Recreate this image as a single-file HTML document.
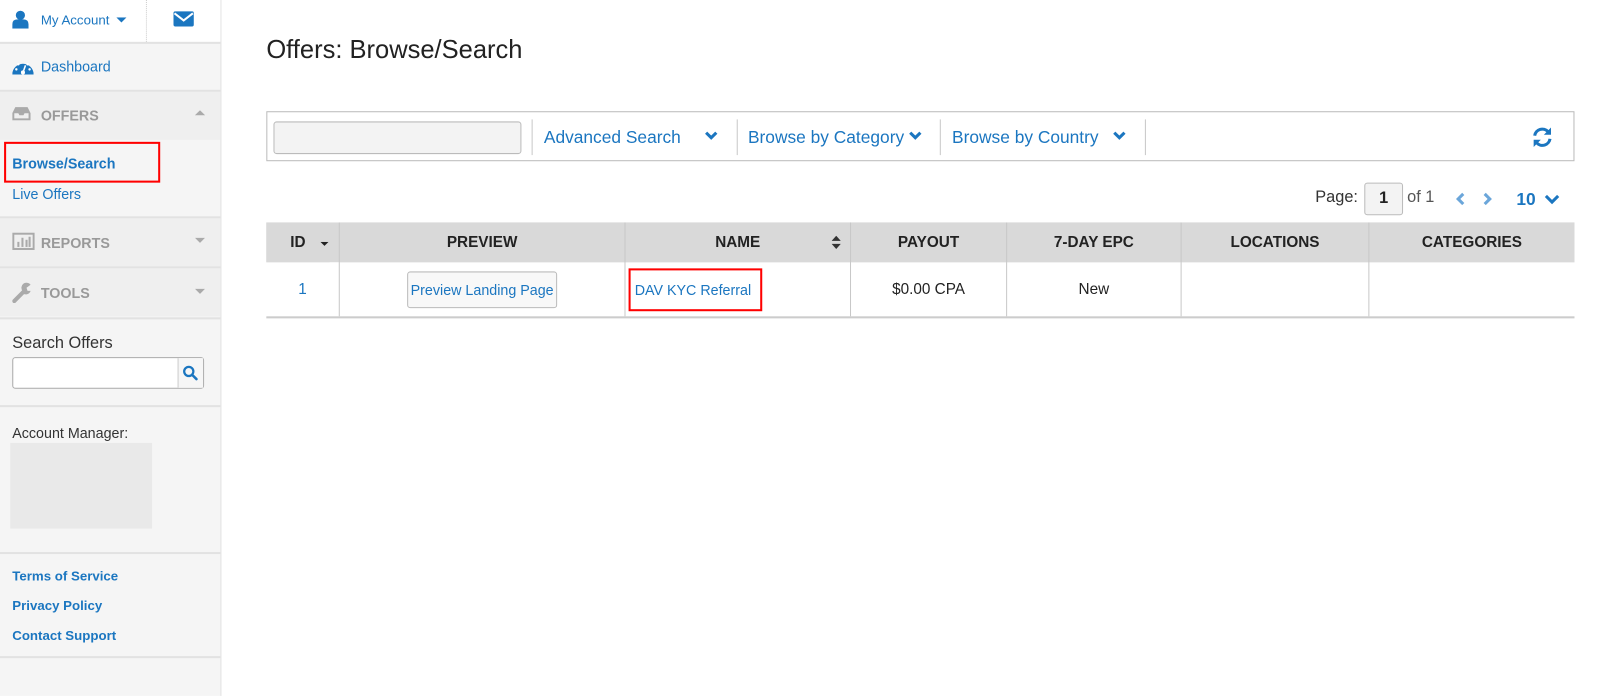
<!DOCTYPE html>
<html><head><style>
*{margin:0;padding:0;box-sizing:border-box}
html,body{width:1600px;height:696px;overflow:hidden;background:#fff}
#w{position:absolute;left:0;top:0;width:1568px;height:682px;transform:scale(1.0204);transform-origin:0 0;font-family:"Liberation Sans",Arial,sans-serif;color:#222}
.a{position:absolute}
.blue{color:#1b76c0}
.sb{left:0;top:0;width:217px;height:682px;background:#f5f5f5;border-right:1px solid #e3e3e3}
.hl{left:0;width:216px;height:2px;background:#e2e2e2}
.sec{left:0;width:216px;background:#efefef}
.gt{font-weight:bold;color:#999;font-size:14px}
.th{top:218px;height:39px;background:#d9d9d9;font-weight:bold;font-size:15px;text-align:center;line-height:39px;color:#222}
.vl{width:1px;background:#c8c8c8}
.td{top:257px;height:53px;line-height:53px;text-align:center;font-size:15px}
</style></head><body><div id="w">
<div class="a sb"></div>
<div class="a" style="left:0;top:0;width:216px;height:41px;background:#fff"></div>
<div class="a" style="left:143px;top:0;height:41px;border-left:1px dotted #ccc"></div>
<div class="a hl" style="top:41px"></div>
<svg class="a" style="left:12px;top:10px" width="16" height="18" viewBox="0 0 16 18"><circle cx="8" cy="5" r="4.5" fill="#1b76c0"/><path d="M0 18v-4q0-5 5-5h6q5 0 5 5v4z" fill="#1b76c0"/></svg>
<div class="a blue" style="left:40px;top:12px;font-size:13px">My Account</div>
<svg class="a" style="left:114px;top:17px" width="10" height="6"><path d="M0 0h10L5 5z" fill="#1b76c0"/></svg>
<svg class="a" style="left:170px;top:11px" width="20" height="15" viewBox="0 0 20 15"><rect width="20" height="15" rx="2" fill="#1b76c0"/><path d="M1 2l9 7 9-7" stroke="#fff" stroke-width="2" fill="none"/></svg>
<svg class="a" style="left:12px;top:57px" width="21" height="17" viewBox="0 0 21 17"><path d="M0 16A10.5 10.5 0 0 1 21 16z" fill="#1b76c0"/><circle cx="10.5" cy="14" r="2" fill="#fff"/><path d="M10.5 14L13 7" stroke="#fff" stroke-width="1.5"/><circle cx="4" cy="11" r="1.2" fill="#fff"/><circle cx="6" cy="6" r="1.2" fill="#fff"/><circle cx="15" cy="6" r="1.2" fill="#fff"/><circle cx="17" cy="11" r="1.2" fill="#fff"/></svg>
<div class="a blue" style="left:40px;top:57px;font-size:14px">Dashboard</div>
<div class="a hl" style="top:88px"></div>
<div class="a sec" style="top:90px;height:47px"></div>
<svg class="a" style="left:12px;top:104px" width="18" height="14" viewBox="0 0 18 14"><path d="M3 1h12l3 6v7H0V7z" fill="#aaa"/><path d="M2 7h4l1 2h4l1-2h4v5H2z" fill="#efefef"/></svg>
<div class="a gt" style="left:40px;top:105px">OFFERS</div>
<svg class="a" style="left:191px;top:108px" width="10" height="6"><path d="M0 5h10L5 0z" fill="#aaa"/></svg>
<div class="a" style="left:4px;top:139px;width:153px;height:40px;border:2px solid #f00"></div>
<div class="a blue" style="left:12px;top:152px;font-size:14px;font-weight:bold">Browse/Search</div>
<div class="a blue" style="left:12px;top:182px;font-size:14px">Live Offers</div>
<div class="a hl" style="top:212px"></div>
<div class="a sec" style="top:214px;height:47px"></div>
<svg class="a" style="left:12px;top:228px" width="22" height="17" viewBox="0 0 22 17"><rect x="1" y="1" width="20" height="15" fill="none" stroke="#aaa" stroke-width="2"/><rect x="5" y="9" width="2" height="5" fill="#aaa"/><rect x="9" y="5" width="2" height="9" fill="#aaa"/><rect x="13" y="7" width="2" height="7" fill="#aaa"/><rect x="16" y="4" width="2" height="10" fill="#aaa"/></svg>
<div class="a gt" style="left:40px;top:230px">REPORTS</div>
<svg class="a" style="left:191px;top:233px" width="10" height="6"><path d="M0 0h10L5 5z" fill="#aaa"/></svg>
<div class="a hl" style="top:261px"></div>
<div class="a sec" style="top:263px;height:47px"></div>
<svg class="a" style="left:12px;top:277px" width="20" height="20" viewBox="0 0 20 20"><path d="M2 18l9-9" stroke="#aaa" stroke-width="4" stroke-linecap="round"/><path d="M10 8a5 5 0 0 1 8-6l-4 3 1 3 3 0a5 5 0 0 1-7 3z" fill="#aaa"/></svg>
<div class="a gt" style="left:40px;top:279px">TOOLS</div>
<svg class="a" style="left:191px;top:283px" width="10" height="6"><path d="M0 0h10L5 5z" fill="#aaa"/></svg>
<div class="a hl" style="top:311px"></div>
<div class="a" style="left:12px;top:328px;font-size:16px;color:#333">Search Offers</div>
<div class="a" style="left:12px;top:350px;width:188px;height:31px;border:1px solid #aaa;border-radius:3px;background:#fff"></div>
<div class="a" style="left:174px;top:351px;width:25px;height:29px;border-left:1px solid #ccc;background:#f6f6f6"></div>
<svg class="a" style="left:179px;top:358px" width="15" height="15" viewBox="0 0 15 15"><circle cx="6" cy="6" r="4.5" fill="none" stroke="#1b76c0" stroke-width="2.2"/><path d="M9.5 9.5l4 4" stroke="#1b76c0" stroke-width="2.5" stroke-linecap="round"/></svg>
<div class="a hl" style="top:397px"></div>
<div class="a" style="left:12px;top:416px;font-size:14px;color:#333">Account Manager:</div>
<div class="a" style="left:10px;top:434px;width:139px;height:84px;background:#e9e9e9"></div>
<div class="a hl" style="top:541px"></div>
<div class="a blue" style="left:12px;top:557px;font-size:13px;font-weight:bold">Terms of Service</div>
<div class="a blue" style="left:12px;top:586px;font-size:13px;font-weight:bold">Privacy Policy</div>
<div class="a blue" style="left:12px;top:615px;font-size:13px;font-weight:bold">Contact Support</div>
<div class="a hl" style="top:643px"></div>

<div class="a" style="left:261px;top:35px;font-size:25px;color:#222">Offers: Browse/Search</div>
<div class="a" style="left:261px;top:109px;width:1282px;height:49px;border:1px solid #bbb"></div>
<div class="a" style="left:268px;top:119px;width:243px;height:32px;border:1px solid #bbb;border-radius:3px;background:#f3f3f3"></div>
<div class="a vl" style="left:521px;top:117px;height:35px"></div>
<div class="a vl" style="left:722px;top:117px;height:35px"></div>
<div class="a vl" style="left:921px;top:117px;height:35px"></div>
<div class="a vl" style="left:1122px;top:117px;height:35px"></div>
<div class="a blue" style="left:533px;top:125px;font-size:17px">Advanced Search</div>
<div class="a blue" style="left:733px;top:125px;font-size:17px">Browse by Category</div>
<div class="a blue" style="left:933px;top:125px;font-size:17px">Browse by Country</div>
<svg class="a" style="left:690px;top:128px" width="14" height="10"><path d="M2 2l5 5 5-5" stroke="#1b76c0" stroke-width="3" fill="none"/></svg>
<svg class="a" style="left:890px;top:128px" width="14" height="10"><path d="M2 2l5 5 5-5" stroke="#1b76c0" stroke-width="3" fill="none"/></svg>
<svg class="a" style="left:1090px;top:128px" width="14" height="10"><path d="M2 2l5 5 5-5" stroke="#1b76c0" stroke-width="3" fill="none"/></svg>
<svg class="a" style="left:1501px;top:124px" width="21" height="21" viewBox="0 0 21 21"><path d="M3 9a7.5 7.5 0 0 1 13-4" stroke="#1b76c0" stroke-width="3" fill="none"/><path d="M19 1v7h-7z" fill="#1b76c0"/><path d="M18 12a7.5 7.5 0 0 1-13 4" stroke="#1b76c0" stroke-width="3" fill="none"/><path d="M2 20v-7h7z" fill="#1b76c0"/></svg>

<div class="a" style="left:1289px;top:185px;font-size:16px;color:#333">Page:</div>
<div class="a" style="left:1337px;top:179px;width:38px;height:32px;border:1px solid #bbb;border-radius:3px;background:#f3f3f3;text-align:center;line-height:30px;font-size:16px;font-weight:bold">1</div>
<div class="a" style="left:1379px;top:185px;font-size:16px;color:#555">of 1</div>
<svg class="a" style="left:1426px;top:188px" width="10" height="14"><path d="M8 2L3 7l5 5" stroke="#6ba6da" stroke-width="3" fill="none"/></svg>
<svg class="a" style="left:1453px;top:188px" width="10" height="14"><path d="M2 2l5 5-5 5" stroke="#6ba6da" stroke-width="3" fill="none"/></svg>
<div class="a blue" style="left:1486px;top:186px;font-size:17px;font-weight:bold">10</div>
<svg class="a" style="left:1513px;top:190px" width="16" height="11"><path d="M2 2l6 6 6-6" stroke="#1b76c0" stroke-width="3" fill="none"/></svg>

<div class="a th" style="left:261px;width:1282px"></div>
<div class="a th" style="left:261px;width:62px">ID</div>
<svg class="a" style="left:314px;top:237px" width="8" height="5"><path d="M0 0h8L4 4z" fill="#222"/></svg>
<div class="a th" style="left:333px;width:279px">PREVIEW</div>
<div class="a th" style="left:613px;width:220px">NAME</div>
<svg class="a" style="left:815px;top:231px" width="9" height="13"><path d="M0 5h9L4.5 0zM0 8h9L4.5 13z" fill="#333"/></svg>
<div class="a th" style="left:834px;width:152px">PAYOUT</div>
<div class="a th" style="left:987px;width:170px">7-DAY EPC</div>
<div class="a th" style="left:1158px;width:183px">LOCATIONS</div>
<div class="a th" style="left:1342px;width:201px">CATEGORIES</div>
<div class="a vl" style="left:332px;top:218px;height:92px"></div>
<div class="a vl" style="left:612px;top:218px;height:92px"></div>
<div class="a vl" style="left:833px;top:218px;height:92px"></div>
<div class="a vl" style="left:986px;top:218px;height:92px"></div>
<div class="a vl" style="left:1157px;top:218px;height:92px"></div>
<div class="a vl" style="left:1341px;top:218px;height:92px"></div>
<div class="a" style="left:261px;top:310px;width:1282px;height:2px;background:#ccc"></div>
<div class="a td blue" style="left:261px;width:71px">1</div>
<div class="a blue" style="left:399px;top:266px;width:147px;height:36px;border:1px solid #bbb;border-radius:3px;background:#f8f8f8;text-align:center;line-height:34px;font-size:14px">Preview Landing Page</div>
<div class="a" style="left:616px;top:263px;width:131px;height:42px;border:2px solid #f00"></div>
<div class="a blue" style="left:622px;top:276px;font-size:14px">DAV KYC Referral</div>
<div class="a td" style="left:834px;width:152px">$0.00 CPA</div>
<div class="a td" style="left:987px;width:170px">New</div>
</div></body></html>
